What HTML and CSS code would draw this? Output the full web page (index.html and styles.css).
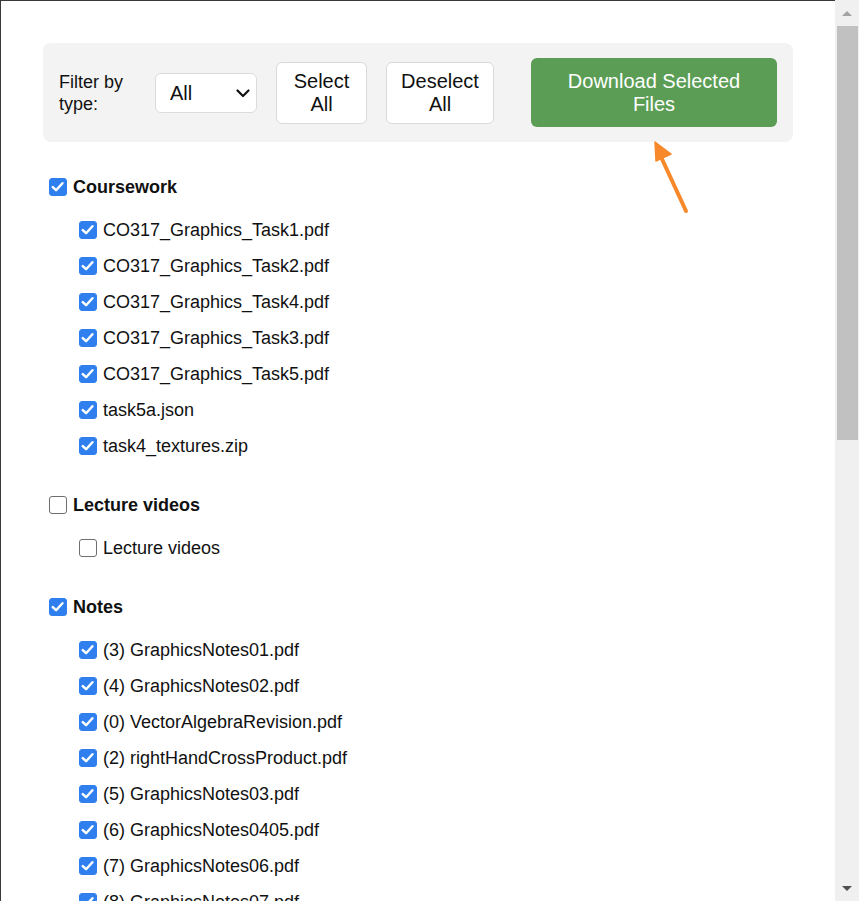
FILE: index.html
```html
<!DOCTYPE html>
<html lang="en">
<head>
<meta charset="utf-8">
<title>Download files</title>
<link rel="stylesheet" href="styles.css">
</head>
<body>
<div class="window">
  <div class="viewport">
    <div class="page">
      <div class="container">
        <div class="toolbar">
          <label class="filter-label" for="type-filter">Filter by type:</label>
          <div class="select-wrap">
            <select id="type-filter" class="type-select">
              <option>All</option>
              <option>pdf</option>
              <option>zip</option>
            </select>
            <svg class="chevron" width="14" height="9" viewBox="0 0 14 9"><path d="M1.5 1.5 L7 7 L12.5 1.5" fill="none" stroke="#111" stroke-width="2.2" stroke-linecap="round" stroke-linejoin="round"/></svg>
          </div>
          <button class="btn btn-select">Select All</button>
          <button class="btn btn-deselect">Deselect All</button>
          <button class="btn-download">Download Selected Files</button>
        </div>

        <div class="groups">
          <section class="group">
            <label class="row heading"><input type="checkbox" checked><span>Coursework</span></label>
            <div class="children">
              <label class="row item"><input type="checkbox" checked><span>CO317_Graphics_Task1.pdf</span></label>
              <label class="row item"><input type="checkbox" checked><span>CO317_Graphics_Task2.pdf</span></label>
              <label class="row item"><input type="checkbox" checked><span>CO317_Graphics_Task4.pdf</span></label>
              <label class="row item"><input type="checkbox" checked><span>CO317_Graphics_Task3.pdf</span></label>
              <label class="row item"><input type="checkbox" checked><span>CO317_Graphics_Task5.pdf</span></label>
              <label class="row item"><input type="checkbox" checked><span>task5a.json</span></label>
              <label class="row item"><input type="checkbox" checked><span>task4_textures.zip</span></label>
            </div>
          </section>

          <section class="group">
            <label class="row heading"><input type="checkbox"><span>Lecture videos</span></label>
            <div class="children">
              <label class="row item"><input type="checkbox"><span>Lecture videos</span></label>
            </div>
          </section>

          <section class="group">
            <label class="row heading"><input type="checkbox" checked><span>Notes</span></label>
            <div class="children">
              <label class="row item"><input type="checkbox" checked><span>(3) GraphicsNotes01.pdf</span></label>
              <label class="row item"><input type="checkbox" checked><span>(4) GraphicsNotes02.pdf</span></label>
              <label class="row item"><input type="checkbox" checked><span>(0) VectorAlgebraRevision.pdf</span></label>
              <label class="row item"><input type="checkbox" checked><span>(2) rightHandCrossProduct.pdf</span></label>
              <label class="row item"><input type="checkbox" checked><span>(5) GraphicsNotes03.pdf</span></label>
              <label class="row item"><input type="checkbox" checked><span>(6) GraphicsNotes0405.pdf</span></label>
              <label class="row item"><input type="checkbox" checked><span>(7) GraphicsNotes06.pdf</span></label>
              <label class="row item"><input type="checkbox" checked><span>(8) GraphicsNotes07.pdf</span></label>
              <label class="row item"><input type="checkbox" checked><span>(9) GraphicsNotes08.pdf</span></label>
              <label class="row item"><input type="checkbox" checked><span>(10) GraphicsNotes09.pdf</span></label>
            </div>
          </section>
        </div>
      </div>

      <svg class="annotation-arrow" width="60" height="90" viewBox="0 0 60 90">
        <line x1="46" y1="70" x2="22" y2="18" stroke="#f7892b" stroke-width="4" stroke-linecap="round"/>
        <polygon points="15,1 16,20 31,13" fill="#f7892b" stroke="#f7892b" stroke-width="1.5" stroke-linejoin="round"/>
      </svg>
    </div>
  </div>

  <div class="scrollbar" aria-hidden="true">
    <div class="sb-button">
      <svg width="12" height="7" viewBox="0 0 12 7"><polygon points="1,6 6,1 11,6" fill="#a3a3a3"/></svg>
    </div>
    <div class="sb-track">
      <div class="sb-thumb"></div>
    </div>
    <div class="sb-button">
      <svg width="12" height="7" viewBox="0 0 12 7"><polygon points="1,1 6,6 11,1" fill="#505050"/></svg>
    </div>
  </div>
</div>
</body>
</html>
```

FILE: styles.css
```css
html,
body {
  margin: 0;
  height: 100%;
  overflow: hidden;
  background: #ffffff;
}

body {
  font-family: "Liberation Sans", Arial, sans-serif;
  color: #111;
}

.window {
  display: flex;
  height: 100%;
}

.viewport {
  flex: 1;
  min-width: 0;
  overflow: hidden;
  border-top: 1px solid #3a3a3a;
  border-left: 1px solid #3a3a3a;
}

.page {
  position: relative;
  padding: 42px 0 60px;
}

.container {
  max-width: 750px;
  margin: 0 auto;
}

/* toolbar */
.toolbar {
  display: flex;
  align-items: center;
  gap: 19px;
  padding: 15px 16px;
  background: #f3f3f3;
  border-radius: 8px;
}

.filter-label {
  width: 77px;
  font-size: 18px;
  line-height: 22px;
  flex: none;
}

.select-wrap {
  position: relative;
  flex: none;
}

.type-select {
  appearance: none;
  -webkit-appearance: none;
  display: block;
  width: 102px;
  height: 40px;
  padding: 0 30px 0 14px;
  font-family: inherit;
  font-size: 20px;
  color: #111;
  background: #fff;
  border: 1px solid #dcdcdc;
  border-radius: 6px;
}

.chevron {
  position: absolute;
  right: 7px;
  top: 16px;
  pointer-events: none;
}

.btn {
  flex: none;
  padding: 7px 10px;
  font-family: inherit;
  font-size: 20px;
  line-height: 23px;
  color: #111;
  background: #fff;
  border: 1px solid #d9d9d9;
  border-radius: 6px;
  text-align: center;
}

.btn-select {
  width: 91px;
}

.btn-deselect {
  width: 108px;
}

.btn-download {
  flex: none;
  margin-left: auto;
  width: 246px;
  padding: 11.5px 30px;
  font-family: inherit;
  font-size: 20px;
  line-height: 23px;
  color: #fff;
  background: #5b9d54;
  border: none;
  border-radius: 6px;
  text-align: center;
}

/* file groups */
.groups {
  margin-top: 27px;
}

.group {
  margin-bottom: 23px;
}

.row {
  display: flex;
  align-items: center;
  gap: 6px;
  height: 36px;
  font-size: 18px;
}

.row input {
  appearance: none;
  -webkit-appearance: none;
  flex: none;
  box-sizing: border-box;
  width: 18px;
  height: 18px;
  margin: 0;
  border: 1.5px solid #6e6e6e;
  border-radius: 3px;
  background: #fff;
}

.row input:checked {
  border-color: #2f7fef;
  background: #2f7fef url("data:image/svg+xml;utf8,<svg xmlns='http://www.w3.org/2000/svg' width='18' height='18' viewBox='0 0 18 18'><path d='M4.2 9.3 L7.4 12.4 L13.6 5.6' fill='none' stroke='white' stroke-width='2.4' stroke-linecap='round' stroke-linejoin='round'/></svg>") no-repeat -1.5px -1.5px;
}

.heading {
  padding-left: 6px;
  font-weight: bold;
}

.children {
  margin-top: 7px;
}

.item {
  padding-left: 36px;
}

.annotation-arrow {
  position: absolute;
  left: 639px;
  top: 140px;
}

/* scrollbar column */
.scrollbar {
  flex: none;
  width: 24px;
  display: flex;
  flex-direction: column;
  background: #f0f0f0;
}

.sb-button {
  height: 26px;
  display: flex;
  align-items: center;
  justify-content: center;
  flex: none;
}

.sb-track {
  flex: 1;
  padding: 0 1px 0 2px;
}

.sb-thumb {
  height: 414px;
  background: #c1c1c1;
}
```
